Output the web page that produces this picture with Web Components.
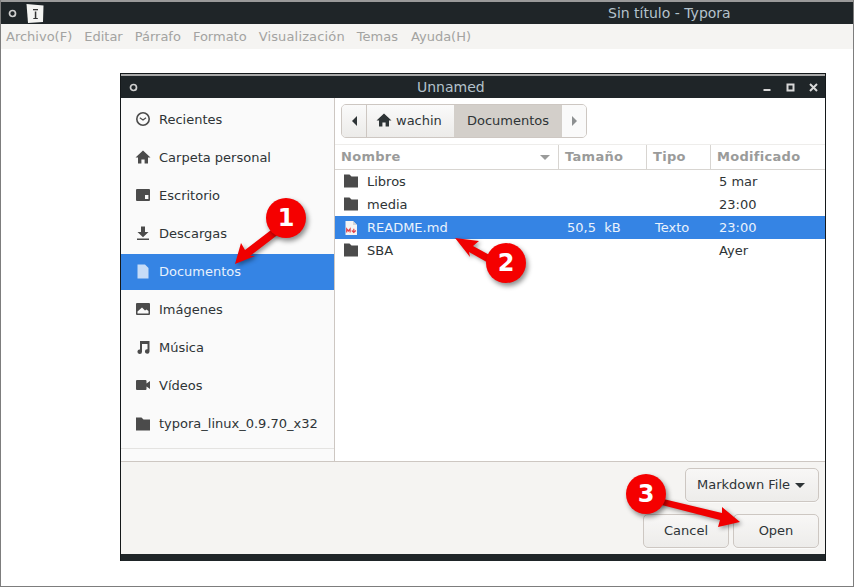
<!DOCTYPE html>
<html lang="es">
<head>
<meta charset="utf-8">
<title>Sin título - Typora</title>
<style>
    html, body { margin: 0; padding: 0; background: #fff; }
    body { font-family: "DejaVu Sans", sans-serif; font-size: 13px; color: #2e3436; }
</style>
</head>
<body>
<typora-window>
    <file-dialog></file-dialog>
</typora-window>

<script>
const ICONS = {
    clock: '<circle cx="8" cy="8" r="6.2" fill="none" stroke="currentColor" stroke-width="1.6"/><path d="M4.8 6.8 8 9l3-2.2" fill="none" stroke="currentColor" stroke-width="1.2"/>',
    home: '<path fill="currentColor" d="M8 1.5 15.5 8.5H13v6H9.6v-4H6.4v4H3v-6H.5z"/>',
    desktop: '<path fill="currentColor" d="M2 2h12a1 1 0 0 1 1 1v10a1 1 0 0 1-1 1H2a1 1 0 0 1-1-1V3a1 1 0 0 1 1-1zm8 6v4h3.4V8z"/>',
    download: '<path fill="currentColor" d="M6 1.5h4v5.5h3.5L8 12.2 2.500 7H6zM2 13.500h12V15H2z"/>',
    doc: '<path fill="currentColor" d="M2.500 1.500h7.500l3.500 3.500v10.500H2.500z"/>',
    image: '<path fill="currentColor" d="M2 2h12a1 1 0 0 1 1 1v10a1 1 0 0 1-1 1H2a1 1 0 0 1-1-1V3a1 1 0 0 1 1-1zm0.500 10.500h11V10L11.500 8.500 10 9.500 7 6.500 2.500 10.500z"/>',
    music: '<path fill="currentColor" d="M5 2h9.500v10.500a2.300 2.300 0 1 1-2-2.300V5H7v7.800a2.300 2.300 0 1 1-2-2.300z"/>',
    video: '<path fill="currentColor" d="M2 3h8.500a1 1 0 0 1 1 1v2.500L15 4v8l-3.500-2.500V12a1 1 0 0 1-1 1H2a1 1 0 0 1-1-1V4a1 1 0 0 1 1-1z"/>',
    folder: '<path fill="currentColor" d="M1 2.500h5.500l2 2H15v11H1z"/>',
    md: '<path fill="#f4f4f4" d="M2.500 1h7.500l4 4v10h-11.500z"/><path fill="#d5d5d5" d="M10 1l4 4h-4z"/><path fill="none" stroke="#e0434b" stroke-width="1.200" d="M3.700 12.500V9l1.700 2 1.700-2v3.500M10.800 8.800v3.200M8.800 10.500l2 2 2-2"/>'
};

class DialogIcon extends HTMLElement {
    constructor() {
        super();
        this.attachShadow({ mode: 'open' });
        this.shadowRoot.innerHTML = `
            <style>
                :host { display: inline-flex; width: 16px; height: 16px; flex: none; color: #4b4b4b; }
                svg { width: 16px; height: 16px; display: block; }
            </style>
            <svg viewBox="0 0 16 16">${ICONS[this.getAttribute('name')] || ''}</svg>
        `;
    }
}
customElements.define('dialog-icon', DialogIcon);

// window manager bar, used by the main window and the dialog
class TitleBar extends HTMLElement {
    constructor() {
        super();
        this.attachShadow({ mode: 'open' });
        this.shadowRoot.innerHTML = `
            <style>
                :host {
                    display: flex;
                    align-items: center;
                    background: #1f2528;
                    color: #b4c2cc;
                    font-size: 14px;
                    box-sizing: border-box;
                }
                .gear { width: 9px; height: 9px; flex: none; }
                .title { white-space: nowrap; }
                .right { margin-left: auto; display: flex; }
            </style>
            <svg class="gear" viewBox="0 0 9 9"><circle cx="4.500" cy="4.500" r="3" fill="none" stroke="#d0d0d0" stroke-width="1.700"/></svg>
            <slot name="logo"></slot>
            <span class="title" style="margin-left:${this.getAttribute('title-offset')}px">${this.getAttribute('label')}</span>
            <div class="right"><slot name="controls"></slot></div>
        `;
    }
}
customElements.define('title-bar', TitleBar);

class TyporaWindow extends HTMLElement {
    constructor() {
        super();
        this.attachShadow({ mode: 'open' });
        const menus = ['Archivo(F)', 'Editar', 'Párrafo', 'Formato', 'Visualización', 'Temas', 'Ayuda(H)'];
        this.shadowRoot.innerHTML = `
            <style>
                :host {
                    display: flex;
                    flex-direction: column;
                    position: relative;
                    width: 854px;
                    height: 587px;
                    box-sizing: border-box;
                    border: 1px solid #7d7d7d;
                    border-top: 0;
                    background: #fff;
                    overflow: hidden;
                }
                .top { height: 2px; background: #9a9a9a; }
                title-bar { height: 22px; padding-left: 7px; }
                .logo { width: 20px; height: 20px; margin-left: 8px; display: block; }
                nav {
                    height: 25px;
                    display: flex;
                    align-items: center;
                    gap: 12px;
                    padding-left: 5px;
                    background: #f5f4f2;
                    color: #a3a3a1;
                }
                nav span:nth-child(5) { letter-spacing: 0.150px; }
                nav span:nth-child(7) { margin-left: 1px; }
                .content { flex: 1; padding: 24px 0 0 119px; }
            </style>
            <div class="top"></div>
            <title-bar label="Sin título - Typora" title-offset="563">
                <svg slot="logo" class="logo" viewBox="0 0 20 20">
                    <path fill="#f4f4f2" d="M1.500 1 18.500 2.500 18 19 3 20z"/>
                    <rect x="8" y="6" width="5" height="1.300" fill="#333"/>
                    <rect x="9.800" y="8.500" width="1.500" height="6.500" fill="#333"/>
                    <rect x="8.300" y="15" width="4.500" height="1" fill="#333"/>
                </svg>
            </title-bar>
            <nav>${menus.map(m => `<span>${m}</span>`).join('')}</nav>
            <div class="content"><slot></slot></div>
            <step-arrows></step-arrows>
        `;
    }
}
customElements.define('typora-window', TyporaWindow);

class PlaceRow extends HTMLElement {
    constructor() {
        super();
        this.attachShadow({ mode: 'open' });
        this.shadowRoot.innerHTML = `
            <style>
                :host {
                    display: flex;
                    align-items: center;
                    gap: 8px;
                    height: 36px;
                    box-sizing: border-box;
                    margin-top: 2px;
                    padding: 0 0 2px 14px;
                    color: #2e3436;
                }
                :host([selected]) { background: #3584e4; color: #e8f1fc; }
                :host([selected]) dialog-icon { color: #c6dcf7; }
            </style>
            <dialog-icon name="${this.getAttribute('icon')}"></dialog-icon>
            <span>${this.getAttribute('label')}</span>
        `;
    }
}
customElements.define('place-row', PlaceRow);

class PlacesSidebar extends HTMLElement {
    constructor() {
        super();
        this.attachShadow({ mode: 'open' });
        const places = [
            ['clock', 'Recientes'], ['home', 'Carpeta personal'], ['desktop', 'Escritorio'],
            ['download', 'Descargas'], ['doc', 'Documentos'], ['image', 'Imágenes'],
            ['music', 'Música'], ['video', 'Vídeos'], ['folder', 'typora_linux_0.9.70_x32']
        ];
        this.shadowRoot.innerHTML = `
            <style>
                :host {
                    display: block;
                    width: 213px;
                    flex: none;
                    box-sizing: content-box;
                    background: #fafafa;
                    border-right: 1px solid #cdc7c2;
                    padding-top: 2px;
                }
                .sep { height: 1px; background: #e4e3e1; margin-top: 6px; }
            </style>
            ${places.map(p => `<place-row icon="${p[0]}" label="${p[1]}" ${p[1] === 'Documentos' ? 'selected' : ''}></place-row>`).join('')}
            <div class="sep"></div>
        `;
    }
}
customElements.define('places-sidebar', PlacesSidebar);

class PathBar extends HTMLElement {
    constructor() {
        super();
        this.attachShadow({ mode: 'open' });
        this.shadowRoot.innerHTML = `
            <style>
                :host {
                    display: flex;
                    width: 246px;
                    height: 34px;
                    box-sizing: border-box;
                    border: 1px solid #cdc7c2;
                    border-radius: 5px;
                    overflow: hidden;
                    background: #f6f5f4;
                    color: #2e3436;
                }
                div { display: flex; align-items: center; box-sizing: border-box; }
                .back { width: 25px; justify-content: center; border-right: 1px solid #cdc7c2; background: linear-gradient(#fafafa, #ecebe9); }
                .home { width: 87px; padding: 0 0 2px 9px; gap: 4px; background: linear-gradient(#fafafa, #ecebe9); }
                .home dialog-icon { color: #2e3436; }
                .cur { width: 108px; justify-content: center; padding-bottom: 2px; background: #d3cfca; }
                .next { flex: 1; justify-content: center; background: #fafafa; }
                i { width: 0; height: 0; border-style: solid; border-width: 5px 0 5px 5px; border-color: transparent transparent transparent #8d9091; }
                .back i { border-width: 5px 5px 5px 0; border-color: transparent #2e3436 transparent transparent; }
            </style>
            <div class="back"><i></i></div>
            <div class="home"><dialog-icon name="home"></dialog-icon><span>wachin</span></div>
            <div class="cur">Documentos</div>
            <div class="next"><i></i></div>
        `;
    }
}
customElements.define('path-bar', PathBar);

class FileRow extends HTMLElement {
    constructor() {
        super();
        this.attachShadow({ mode: 'open' });
        this.shadowRoot.innerHTML = `
            <style>
                :host {
                    display: grid;
                    grid-template-columns: 223px 88px 64px 1fr;
                    align-items: center;
                    height: 23px;
                    color: #2e3436;
                }
                :host([selected]) { background: #3584e4; color: #eaf2fc; }
                .name { display: flex; align-items: center; gap: 8px; padding-left: 8px; }
                .name dialog-icon[name="folder"] { margin-top: -4px; }
                .size { padding-left: 9px; white-space: pre; }
                .type { padding-left: 9px; }
                .date { padding-left: 9px; }
            </style>
            <div class="name"><dialog-icon name="${this.getAttribute('icon') || 'folder'}"></dialog-icon><span>${this.getAttribute('name')}</span></div>
            <div class="size">${this.getAttribute('size') || ''}</div>
            <div class="type">${this.getAttribute('type') || ''}</div>
            <div class="date">${this.getAttribute('date') || ''}</div>
        `;
    }
}
customElements.define('file-row', FileRow);

class FileList extends HTMLElement {
    constructor() {
        super();
        this.attachShadow({ mode: 'open' });
        this.shadowRoot.innerHTML = `
            <style>
                :host { display: block; flex: 1; }
                .head {
                    display: grid;
                    grid-template-columns: 224px 88px 64px 1fr;
                    height: 26px;
                    box-sizing: border-box;
                    border-top: 1px solid #eeedeb;
                    border-bottom: 1px solid #d8d5d1;
                    color: #9a9b9a;
                    font-weight: bold;
                    letter-spacing: 0.300px;
                }
                .head div {
                    display: flex;
                    align-items: center;
                    padding: 0 0 2px 6px;
                    border-right: 1px solid #d8d5d1;
                    position: relative;
                }
                .head div:last-child { border-right: 0; }
                .sort {
                    position: absolute;
                    right: 8px;
                    top: 10px;
                    border-style: solid;
                    border-width: 5px 5px 0;
                    border-color: #9a9b9a transparent transparent;
                }
            </style>
            <div class="head">
                <div>Nombre<span class="sort"></span></div>
                <div>Tamaño</div>
                <div>Tipo</div>
                <div>Modificado</div>
            </div>
            <file-row name="Libros" date="5 mar"></file-row>
            <file-row name="media" date="23:00"></file-row>
            <file-row name="README.md" icon="md" size="50,5  kB" type="Texto" date="23:00" selected></file-row>
            <file-row name="SBA" date="Ayer"></file-row>
        `;
    }
}
customElements.define('file-list', FileList);

class DialogButton extends HTMLElement {
    constructor() {
        super();
        this.attachShadow({ mode: 'open' });
        this.shadowRoot.innerHTML = `
            <style>
                :host {
                    display: inline-flex;
                    align-items: center;
                    justify-content: center;
                    gap: 5px;
                    width: 86px;
                    height: 34px;
                    box-sizing: border-box;
                    padding-bottom: 2px;
                    border: 1px solid #cdc7c2;
                    border-radius: 5px;
                    background: linear-gradient(#f8f7f6, #edecea);
                    color: #2e3436;
                    box-shadow: 0 1px 0 rgba(255,255,255,.6);
                }
            </style>
            <slot></slot>
        `;
    }
}
customElements.define('dialog-button', DialogButton);

class FileDialog extends HTMLElement {
    constructor() {
        super();
        this.attachShadow({ mode: 'open' });
        this.shadowRoot.innerHTML = `
            <style>
                :host {
                    display: flex;
                    flex-direction: column;
                    width: 706px;
                    height: 488px;
                    box-sizing: border-box;
                    border: 1px solid #14181a;
                    border-top: 1px solid #14181a;
                    border-bottom: 0;
                    background: #fff;
                }
                .line { height: 2px; background: #a9a9a9; flex: none; }
                title-bar { height: 22px; flex: none; padding-left: 8px; }
                .ctl { display: flex; align-items: center; gap: 12px; padding-right: 6px; }
                .ctl svg { width: 11px; height: 11px; display: block; }
                .mid { flex: 1; display: flex; min-height: 0; }
                .main { flex: 1; display: flex; flex-direction: column; }
                .path { padding: 6px; }
                .actions {
                    height: 93px;
                    flex: none;
                    box-sizing: border-box;
                    border-top: 1px solid #cdc7c2;
                    background: #f5f4f2;
                    display: flex;
                    flex-direction: column;
                    align-items: flex-end;
                    gap: 12px;
                    padding: 6px 6px 0 0;
                }
                .buttons { display: flex; gap: 4px; }
                .filter { width: 134px; padding-right: 2px; }
                .filter i { margin-top: 2px; border-style: solid; border-width: 5px 5px 0; border-color: #2e3436 transparent transparent; }
                .foot { height: 7px; flex: none; background: #1f2528; }
            </style>
            <div class="line"></div>
            <title-bar label="Unnamed" title-offset="279">
                <div class="ctl" slot="controls">
                    <svg viewBox="0 0 11 11"><rect x="1.500" y="7" width="7" height="2" fill="#d8d8d8"/></svg>
                    <svg viewBox="0 0 11 11"><rect x="2.500" y="2.500" width="6" height="6" fill="none" stroke="#d8d8d8" stroke-width="2"/></svg>
                    <svg viewBox="0 0 11 11"><path d="M2 2l7 7M9 2l-7 7" stroke="#d8d8d8" stroke-width="2"/></svg>
                </div>
            </title-bar>
            <div class="mid">
                <places-sidebar></places-sidebar>
                <div class="main">
                    <div class="path"><path-bar></path-bar></div>
                    <file-list></file-list>
                </div>
            </div>
            <div class="actions">
                <dialog-button class="filter">Markdown File <i></i></dialog-button>
                <div class="buttons">
                    <dialog-button>Cancel</dialog-button>
                    <dialog-button>Open</dialog-button>
                </div>
            </div>
            <div class="foot"></div>
        `;
    }
}
customElements.define('file-dialog', FileDialog);

// red numbered marks drawn over the screenshot
class StepBadge extends HTMLElement {
    constructor() {
        super();
        this.attachShadow({ mode: 'open' });
        this.shadowRoot.innerHTML = `
            <style>
                :host {
                    position: absolute;
                    left: ${this.getAttribute('x') - 20}px;
                    top: ${this.getAttribute('y') - 20}px;
                    width: 40px;
                    height: 40px;
                    display: flex;
                    align-items: center;
                    justify-content: center;
                    border-radius: 50%;
                    background: #f50000;
                    color: #fff;
                    font: bold 24px "DejaVu Sans", sans-serif;
                    box-shadow: 2px 3px 5px rgba(0,0,0,.45);
                }
            </style>
            <slot></slot>
        `;
    }
}
customElements.define('step-badge', StepBadge);

class StepArrows extends HTMLElement {
    constructor() {
        super();
        this.attachShadow({ mode: 'open' });
        this.shadowRoot.innerHTML = `
            <style>
                :host { position: absolute; left: -1px; top: 0; width: 854px; height: 587px; pointer-events: none; }
                svg { position: absolute; left: 0; top: 0; filter: drop-shadow(2px 2px 2px rgba(0,0,0,.4)); }
                polygon { fill: #f00000; }
            </style>
            <svg width="854" height="587">
                <polygon points="275,227 280,233 250,256 255,256 235,264 241,243 245,250"/>
                <polygon points="495,258 492,265 469,252 470,257 455,238 479,241 473,246"/>
                <polygon points="655,497 654,503 720,520 718,527 740,522 722,507 722,513"/>
            </svg>
            <step-badge x="286" y="218">1</step-badge>
            <step-badge x="506" y="263">2</step-badge>
            <step-badge x="646" y="494">3</step-badge>
        `;
    }
}
customElements.define('step-arrows', StepArrows);
</script>
</body>
</html>
